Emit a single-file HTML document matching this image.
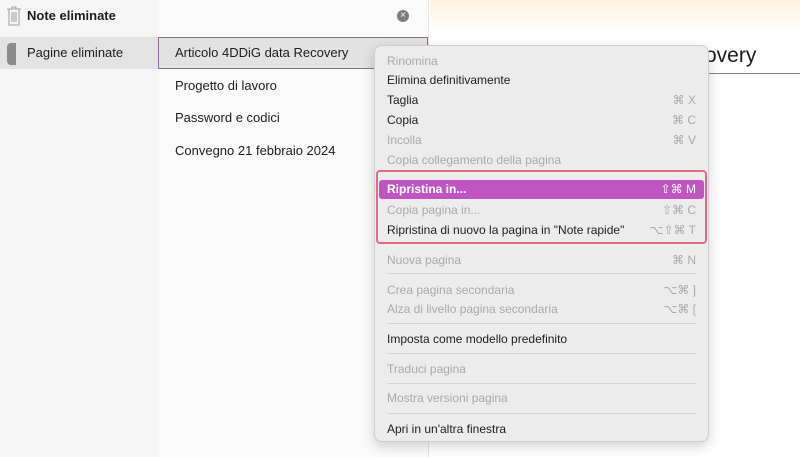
<!DOCTYPE html>
<html><head><meta charset="utf-8"><style>
*{margin:0;padding:0;box-sizing:border-box}
body{width:800px;height:457px;overflow:hidden;background:#fff;font-family:"Liberation Sans",sans-serif;position:relative;font-size:13px;color:#1d1d1d}
.a{position:absolute}
.mi{position:absolute;left:387px;font-size:12px;line-height:20px;white-space:nowrap}
.dis{color:#a9a9a9}
.sc{position:absolute;right:104px;font-size:12px;line-height:20px;color:#a9a9a9;text-align:right;white-space:nowrap}
.sep{position:absolute;left:387px;width:309px;height:1px;background:#d4d4d4}
</style></head><body>
<div class="a" style="left:430px;top:0;width:370px;height:30px;background:linear-gradient(#fdf3dc,#fff)"></div>
<div class="a" style="left:0;top:0;width:158px;height:457px;background:#f6f6f6"></div>
<div class="a" style="left:158px;top:0;width:270px;height:457px;background:#fafafa"></div>
<div class="a" style="left:428px;top:0;width:1px;height:457px;background:#e6e6e6"></div>
<svg class="a" style="left:6px;top:6px" width="16" height="20" viewBox="0 0 16 20"><path d="M1 3h14M6 3V1h4v2M3 3v16h10V3M6 6v10M8 6v10M10 6v10" fill="none" stroke="#888" stroke-width="0.8"/></svg>
<div class="a" style="left:27px;top:8px;font-weight:bold;font-size:13px">Note eliminate</div>
<div class="a" style="left:397px;top:10px;width:12px;height:12px;border-radius:50%;background:#7c7c7c;color:#fff;font-size:10px;line-height:12px;text-align:center">×</div>
<div class="a" style="left:0;top:37px;width:158px;height:32px;background:#e3e3e3"></div>
<div class="a" style="left:7px;top:43px;width:9px;height:22px;background:#8c8c8c;border-radius:4px 0 0 4px"></div>
<div class="a" style="left:27px;top:45px">Pagine eliminate</div>
<div class="a" style="left:158px;top:37px;width:270px;height:32px;background:#e2e2e2;border:1px solid #8a6b9c"></div>
<div class="a" style="left:175px;top:45px">Articolo 4DDiG data Recovery</div>
<div class="a" style="left:175px;top:78px">Progetto di lavoro</div>
<div class="a" style="left:175px;top:110px">Password e codici</div>
<div class="a" style="left:175px;top:143px">Convegno 21 febbraio 2024</div>
<div class="a" style="left:705px;top:44px;font-size:21px">overy</div>
<div class="a" style="left:705px;top:73px;width:95px;height:1px;background:#888"></div>
<div class="a" style="left:374px;top:45px;width:335px;height:397px;background:#ececec;border:1px solid #cfcfcf;border-radius:8px;box-shadow:0 4px 12px rgba(0,0,0,.18)"></div>
<div class="mi dis" style="top:51px">Rinomina</div>
<div class="mi" style="top:70px">Elimina definitivamente</div>
<div class="mi" style="top:90px">Taglia</div><div class="sc" style="top:90px">⌘ X</div>
<div class="mi" style="top:110px">Copia</div><div class="sc" style="top:110px">⌘ C</div>
<div class="mi dis" style="top:130px">Incolla</div><div class="sc" style="top:130px">⌘ V</div>
<div class="mi dis" style="top:150px">Copia collegamento della pagina</div>
<div class="a" style="left:376px;top:170px;width:331px;height:74px;border:2px solid #df6a88;border-radius:4px"></div>
<div class="a" style="left:379px;top:180px;width:325px;height:19px;background:#bf55c0;border-radius:3px"></div>
<div class="mi" style="top:179px;color:#fff;font-weight:bold">Ripristina in...</div><div class="sc" style="top:179px;color:#fff">⇧⌘ M</div>
<div class="mi dis" style="top:200px">Copia pagina in...</div><div class="sc" style="top:200px">⇧⌘ C</div>
<div class="mi" style="top:220px">Ripristina di nuovo la pagina in "Note rapide"</div><div class="sc" style="top:220px">⌥⇧⌘ T</div>
<div class="mi dis" style="top:250px">Nuova pagina</div><div class="sc" style="top:250px">⌘ N</div>
<div class="sep" style="top:273px"></div>
<div class="mi dis" style="top:280px">Crea pagina secondaria</div><div class="sc" style="top:280px">⌥⌘ ]</div>
<div class="mi dis" style="top:299px">Alza di livello pagina secondaria</div><div class="sc" style="top:299px">⌥⌘ [</div>
<div class="sep" style="top:323px"></div>
<div class="mi" style="top:329px">Imposta come modello predefinito</div>
<div class="sep" style="top:353px"></div>
<div class="mi dis" style="top:359px">Traduci pagina</div>
<div class="sep" style="top:383px"></div>
<div class="mi dis" style="top:388px">Mostra versioni pagina</div>
<div class="sep" style="top:413px"></div>
<div class="mi" style="top:419px">Apri in un'altra finestra</div>
</body></html>
